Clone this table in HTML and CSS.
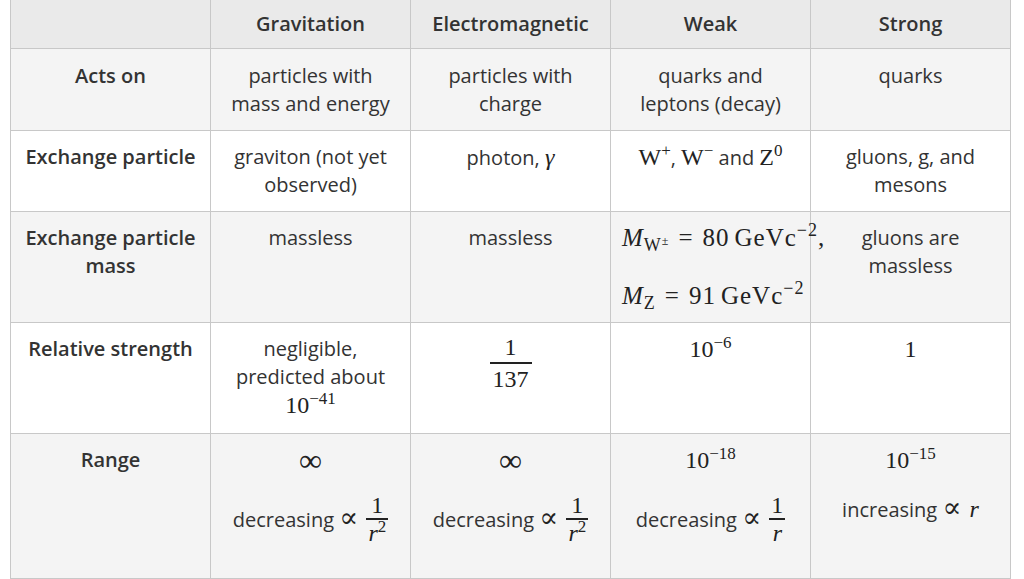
FILE: index.html
```html
<!DOCTYPE html>
<html>
<head>
<meta charset="utf-8">
<link rel="stylesheet" href="styles.css">
</head>
<body>
<table class="forces">
  <colgroup>
    <col class="c"><col class="c"><col class="c"><col class="c"><col class="c">
  </colgroup>
  <thead>
    <tr class="head">
      <th></th>
      <th>Gravitation</th>
      <th>Electromagnetic</th>
      <th>Weak</th>
      <th>Strong</th>
    </tr>
  </thead>
  <tbody>
    <tr class="grey first">
      <th>Acts on</th>
      <td>particles with mass and energy</td>
      <td>particles with charge</td>
      <td>quarks and leptons (decay)</td>
      <td>quarks</td>
    </tr>
    <tr class="white">
      <th>Exchange particle</th>
      <td>graviton (not yet observed)</td>
      <td>photon, <span class="m mi">γ</span></td>
      <td><span class="m">W<sup class="sp">+</sup></span>, <span class="m">W<sup class="sp">−</sup></span> and <span class="m">Z<sup class="sp">0</sup></span></td>
      <td>gluons, g, and mesons</td>
    </tr>
    <tr class="grey">
      <th>Exchange particle mass</th>
      <td>massless</td>
      <td>massless</td>
      <td class="left">
        <div class="disp d1"><span class="m"><span class="mi">M</span><sub class="sb">W<sup class="pm">±</sup></sub><span class="op">=</span>80<span class="th"></span>GeVc<sup class="sp">−2</sup>,</span></div>
        <div class="disp d2"><span class="m"><span class="mi">M</span><sub class="sb">Z</sub><span class="op">=</span>91<span class="th"></span>GeVc<sup class="sp">−2</sup></span></div>
      </td>
      <td>gluons are massless</td>
    </tr>
    <tr class="white r4">
      <th>Relative strength</th>
      <td>negligible, predicted about <span class="m">10<sup class="sp">−41</sup></span></td>
      <td><div class="fdisp"><span class="frac big"><span class="num">1</span><span class="bar"></span><span class="den">137</span></span></div></td>
      <td><span class="m">10<sup class="sp">−6</sup></span></td>
      <td><span class="m">1</span></td>
    </tr>
    <tr class="grey">
      <th>Range</th>
      <td><div class="inf">∞</div><div class="fline">decreasing <span class="prop">∝</span> <span class="frac"><span class="num">1</span><span class="bar"></span><span class="den"><span class="mi">r</span><sup class="sp">2</sup></span></span></div></td>
      <td><div class="inf">∞</div><div class="fline">decreasing <span class="prop">∝</span> <span class="frac"><span class="num">1</span><span class="bar"></span><span class="den"><span class="mi">r</span><sup class="sp">2</sup></span></span></div></td>
      <td><div class="m">10<sup class="sp">−18</sup></div><div class="fline">decreasing <span class="prop">∝</span> <span class="frac"><span class="num">1</span><span class="bar"></span><span class="den r1"><span class="mi">r</span></span></span></div></td>
      <td><div class="m">10<sup class="sp">−15</sup></div><div class="iline">increasing <span class="prop">∝</span> <span class="m mi">r</span></div></td>
    </tr>
  </tbody>
</table>
</body>
</html>
```

FILE: styles.css
```css
html, body {
  margin: 0;
  padding: 0;
  background: #ffffff;
}
body {
  font-family: "Open Sans", "Liberation Sans", sans-serif;
  font-size: 20px;
  color: #333333;
}
.forces {
  margin-left: 10px;
  border-collapse: collapse;
  table-layout: fixed;
  width: 1001px;
}
.c { width: 200px; }
.forces th, .forces td {
  border: 1px solid #c8c8c8;
  padding: 12px 12px;
  line-height: 28px;
  text-align: center;
  vertical-align: top;
}
.forces thead th {
  border-top: none;
  background: #eaeaea;
  padding: 10px 8px;
  font-weight: 600;
  color: #333;
}
.forces tbody th {
  font-weight: 600;
  color: #333;
  padding-left: 8px;
  padding-right: 8px;
}
.forces tr.first th, .forces tr.first td { padding-top: 13px; }
.forces tr.r4 th, .forces tr.r4 td { padding-bottom: 13px; }
.grey th, .grey td { background: #f4f4f4; }
.white th, .white td { background: #ffffff; }

.m {
  font-family: "Liberation Serif", "DejaVu Serif", serif;
  font-size: 24px;
  color: #222;
}
.mi { font-style: italic; }
.sp {
  font-size: 17px;
  vertical-align: 0.55em;
  line-height: 0;
}
.sb {
  font-size: 17px;
  vertical-align: -0.3em;
  line-height: 0;
}
.pm {
  font-size: 12px;
  vertical-align: 0.5em;
  line-height: 0;
}
.op { padding: 0 9px; }
.th { display: inline-block; width: 5px; }

.forces td.left { text-align: left; padding-left: 11px; padding-right: 0; padding-bottom: 11px; }
.disp { white-space: nowrap; line-height: 28px; }
.disp .m { font-size: 25px; letter-spacing: 1px; }
.disp .sp, .disp .sb { font-size: 18px; }
.d2 { margin-top: 29px; }

.inf {
  font-family: "Liberation Serif", "DejaVu Serif", serif;
  font-size: 32px;
  line-height: 28px;
  color: #222;
}
.frac {
  display: inline-flex;
  flex-direction: column;
  align-items: center;
  vertical-align: 14px;
  font-family: "Liberation Serif", "DejaVu Serif", serif;
  font-size: 24px;
  color: #222;
  line-height: 1;
}
.frac .num, .frac .den { line-height: 24px; padding: 0 2px; }
.frac .bar {
  align-self: stretch;
  height: 1.5px;
  background: #222;
  margin: 1px 0 1.5px;
}
.fdisp { display: flex; justify-content: center; }
.frac.big { vertical-align: baseline; }
.frac.big .num, .frac.big .den { padding: 0 3px; }
.frac.big .bar { margin: 3px 0 3.5px; }
.fline { margin-top: 19px; margin-bottom: 21px; line-height: 28px; }
.iline { margin-top: 21px; }
.prop {
  font-family: "Liberation Serif", "DejaVu Serif", serif;
  font-size: 28px;
  line-height: 20px;
  color: #222;
  margin-right: 3px;
}
```
